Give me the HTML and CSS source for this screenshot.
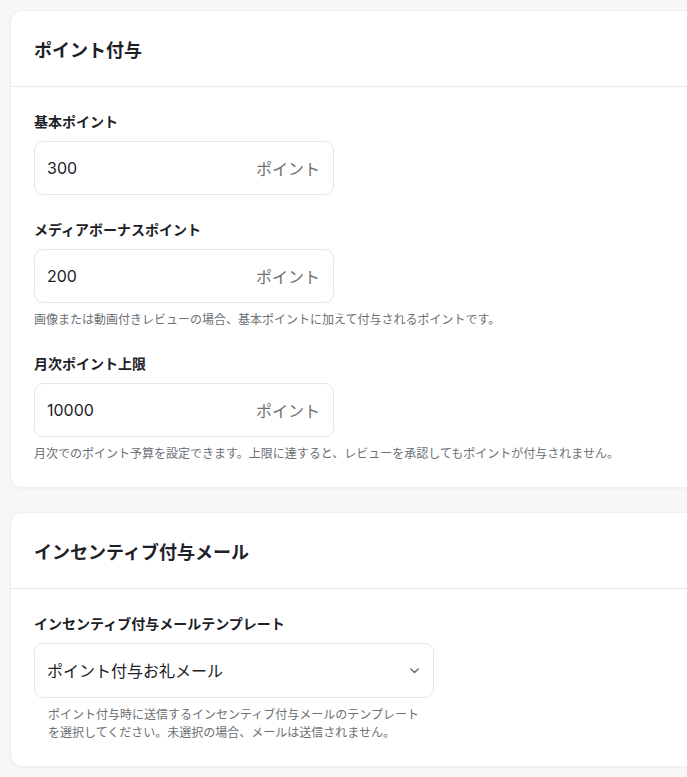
FILE: index.html
```html
<!DOCTYPE html>
<html lang="ja">
<head>
    <meta charset="UTF-8">
    <meta name="viewport" content="width=device-width, initial-scale=1.0">
    <title>インセンティブ設定</title>
    <link rel="stylesheet" href="styles.css">
</head>
<body>

<div class="page">
    <section class="card">
        <div class="card-header">
            <h2>ポイント付与</h2>
        </div>
        <div class="card-body">
            <div class="field">
                <label for="basePoint">基本ポイント</label>
                <div class="input-box">
                    <input type="text" id="basePoint" value="300">
                    <span class="unit">ポイント</span>
                </div>
            </div>

            <div class="field">
                <label for="mediaPoint">メディアボーナスポイント</label>
                <div class="input-box">
                    <input type="text" id="mediaPoint" value="200">
                    <span class="unit">ポイント</span>
                </div>
                <p class="help">画像または動画付きレビューの場合、基本ポイントに加えて付与されるポイントです。</p>
            </div>

            <div class="field">
                <label for="monthlyLimit">月次ポイント上限</label>
                <div class="input-box">
                    <input type="text" id="monthlyLimit" value="10000">
                    <span class="unit">ポイント</span>
                </div>
                <p class="help">月次でのポイント予算を設定できます。上限に達すると、レビューを承認してもポイントが付与されません。</p>
            </div>
        </div>
    </section>

    <section class="card">
        <div class="card-header">
            <h2>インセンティブ付与メール</h2>
        </div>
        <div class="card-body">
            <div class="field">
                <label for="mailTemplate">インセンティブ付与メールテンプレート</label>
                <div class="select-box">
                    <select id="mailTemplate">
                        <option>ポイント付与お礼メール</option>
                    </select>
                    <svg class="chevron" width="15" height="15" viewBox="0 0 20 20" fill="none" stroke="currentColor" stroke-width="2" stroke-linecap="round" stroke-linejoin="round">
                        <path d="M5 8l5 4.5L15 8"/>
                    </svg>
                </div>
                <p class="help help-indent">ポイント付与時に送信するインセンティブ付与メールのテンプレートを選択してください。未選択の場合、メールは送信されません。</p>
            </div>
        </div>
    </section>
</div>

</body>
</html>
```

FILE: styles.css
```css
body {
    margin: 0;
    background-color: #f7f7f8;
    font-family: Inter, "Noto Sans CJK JP", sans-serif;
    color: #1f2328;
    overflow: hidden;
}
.page {
    width: 760px;
    padding: 10px;
    display: flex;
    flex-direction: column;
    gap: 24px;
}
.card {
    background: #fff;
    border: 1px solid #eeeff1;
    border-radius: 12px;
    box-shadow: 0 1px 3px rgba(0, 0, 0, 0.04);
}
.card-header {
    padding: 0 23px;
    height: 75px;
    display: flex;
    align-items: center;
    border-bottom: 1px solid #e9eaec;
}
.card-header h2 {
    margin: 0;
    font-size: 18px;
    font-weight: 700;
    color: #1d2127;
}
.card-body {
    padding: 24px 23px 24px;
    display: flex;
    flex-direction: column;
    gap: 24px;
}
.field label {
    display: block;
    font-size: 14px;
    font-weight: 700;
    line-height: 22px;
    margin-bottom: 8px;
    color: #1d2127;
}
.input-box {
    width: 300px;
    height: 54px;
    box-sizing: border-box;
    border: 1px solid #e6e7ea;
    border-radius: 9px;
    display: flex;
    align-items: center;
    padding: 0 13px 0 12px;
}
.input-box input {
    flex: 1;
    min-width: 0;
    border: none;
    outline: none;
    font-family: inherit;
    font-size: 16px;
    color: #1d2127;
    padding: 0;
    background: transparent;
}
.unit {
    font-size: 16px;
    color: #6b7075;
}
.help {
    margin: 8px 0 0;
    font-size: 12px;
    line-height: 18px;
    color: #6b7075;
}
.select-box {
    position: relative;
    width: 400px;
    height: 55px;
    box-sizing: border-box;
    border: 1px solid #e6e7ea;
    border-radius: 9px;
}
.select-box select {
    appearance: none;
    width: 100%;
    height: 100%;
    border: none;
    outline: none;
    background: transparent;
    font-family: inherit;
    font-size: 16px;
    color: #1d2127;
    padding: 0 40px 0 12px;
}
.chevron {
    position: absolute;
    right: 11px;
    top: 19px;
    color: #64707d;
    pointer-events: none;
}
.help-indent {
    width: 372px;
    padding: 0 14px;
    margin-top: 8px;
}
```
